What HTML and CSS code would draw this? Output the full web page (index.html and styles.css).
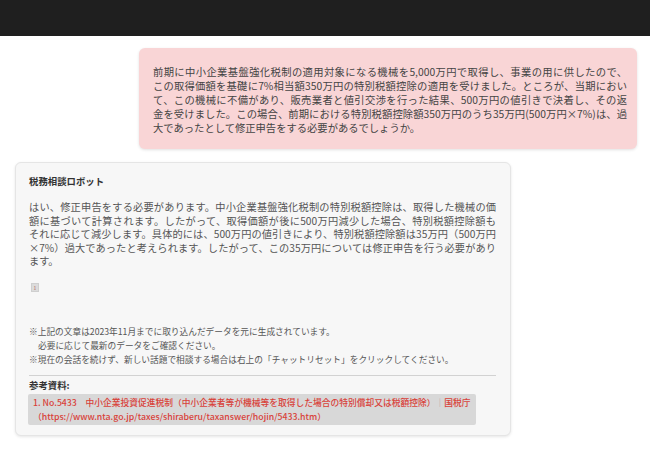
FILE: index.html
```html
<!DOCTYPE html>
<html lang="ja">
<head>
<meta charset="utf-8">
<link rel="stylesheet" href="styles.css">
</head>
<body>
<header class="topbar"></header>
<main class="chat">
  <div class="user-row">
    <div class="bubble">
      <span class="ln">前期に中小企業基盤強化税制の適用対象になる機械を5,000万円で取得し、事業の用に供したので、</span>
      <span class="ln">この取得価額を基礎に7%相当額350万円の特別税額控除の適用を受けました。ところが、当期におい</span>
      <span class="ln">て、この機械に不備があり、販売業者と値引交渉を行った結果、500万円の値引きで決着し、その返</span>
      <span class="ln">金を受けました。この場合、前期における特別税額控除額350万円のうち35万円(500万円×7%)は、過</span>
      <span class="ln last">大であったとして修正申告をする必要があるでしょうか。</span>
    </div>
  </div>
  <section class="bot-card">
    <div class="bot-name">税務相談ロボット</div>
    <p class="answer">
      <span class="ln">はい、修正申告をする必要があります。中小企業基盤強化税制の特別税額控除は、取得した機械の価</span>
      <span class="ln">額に基づいて計算されます。したがって、取得価額が後に500万円減少した場合、特別税額控除額も</span>
      <span class="ln">それに応じて減少します。具体的には、500万円の値引きにより、特別税額控除額は35万円（500万円</span>
      <span class="ln">×7%）過大であったと考えられます。したがって、この35万円については修正申告を行う必要があり</span>
      <span class="ln last">ます。</span>
    </p>
    <span class="cite">1</span>
    <div class="notes">
      <div>※上記の文章は2023年11月までに取り込んだデータを元に生成されています。</div>
      <div class="indent">必要に応じて最新のデータをご確認ください。</div>
      <div>※現在の会話を続けず、新しい話題で相談する場合は右上の「チャットリセット」をクリックしてください。</div>
    </div>
    <div class="refs">
      <div class="refs-title">参考資料:</div>
      <div class="ref-box">
        <div>1. No.5433　中小企業投資促進税制（中小企業者等が機械等を取得した場合の特別償却又は税額控除）<span class="sep">｜</span>国税庁</div>
        <div>（https://www.nta.go.jp/taxes/shiraberu/taxanswer/hojin/5433.htm）</div>
      </div>
    </div>
  </section>
</main>
</body>
</html>
```
FILE: styles.css
```css
html, body {
  margin: 0;
  padding: 0;
}
body {
  width: 650px;
  height: 461px;
  overflow: hidden;
  background: #ffffff;
  font-family: "Noto Sans CJK JP", "Noto Sans", sans-serif;
  color: #4a4a4a;
  text-spacing-trim: space-all;
}
.topbar {
  height: 36px;
  background: #1f1f1f;
}
.chat {
  display: flex;
  flex-direction: column;
}
.user-row {
  display: flex;
  padding: 12px 13px 0 139px;
}
.ln {
  display: block;
  text-align: justify;
  text-align-last: justify;
}
.ln.last {
  text-align-last: left;
}
.bubble {
  width: 474px;
  padding: 17px 10px 14px 14px;
  background: #f9d5d6;
  border-radius: 6px;
  box-shadow: 0 1px 3px rgba(0, 0, 0, 0.12);
  font-size: 10.3px;
  line-height: 14px;
  color: #444;
}
.bot-card {
  margin: 13px 0 0 15px;
  width: 467px;
  padding: 12px 14px 10px 13px;
  background: #f7f7f7;
  border: 1px solid #e5e5e5;
  border-radius: 6px;
  box-shadow: 0 1px 3px rgba(0, 0, 0, 0.10);
  display: flex;
  flex-direction: column;
  align-items: flex-start;
}
.bot-name {
  font-size: 9.4px;
  font-weight: bold;
  line-height: 13px;
  color: #333;
}
.answer {
  margin: 12px 0 0 0;
  width: 467px;
  font-size: 10.2px;
  line-height: 13.5px;
  color: #555;
}
.cite {
  margin: 15px 0 0 2px;
  width: 6px;
  height: 7px;
  background: #dcdcdc;
  border: 0.5px solid #cfcfcf;
  font-size: 5px;
  line-height: 7px;
  text-align: center;
  color: #b05a5a;
}
.notes {
  margin-top: 33px;
  font-size: 8.7px;
  line-height: 14px;
  color: #555;
}
.notes .indent {
  padding-left: 9px;
}
.refs {
  margin-top: 8px;
  width: 467px;
  border-top: 1px solid #d2d2d2;
  padding-top: 2px;
  display: flex;
  flex-direction: column;
  align-items: flex-start;
}
.refs-title {
  font-size: 9.4px;
  font-weight: bold;
  line-height: 14px;
  color: #333;
}
.ref-box {
  margin-top: 2px;
  margin-left: -1px;
  padding: 2px 5px 0 5px;
  background: #d8d8d8;
  border-radius: 2px;
  font-size: 8.75px;
  font-weight: 500;
  line-height: 14.5px;
  color: #d9423a;
}
.ref-box .sep {
  color: #b9a0a0;
  font-weight: normal;
}
```
